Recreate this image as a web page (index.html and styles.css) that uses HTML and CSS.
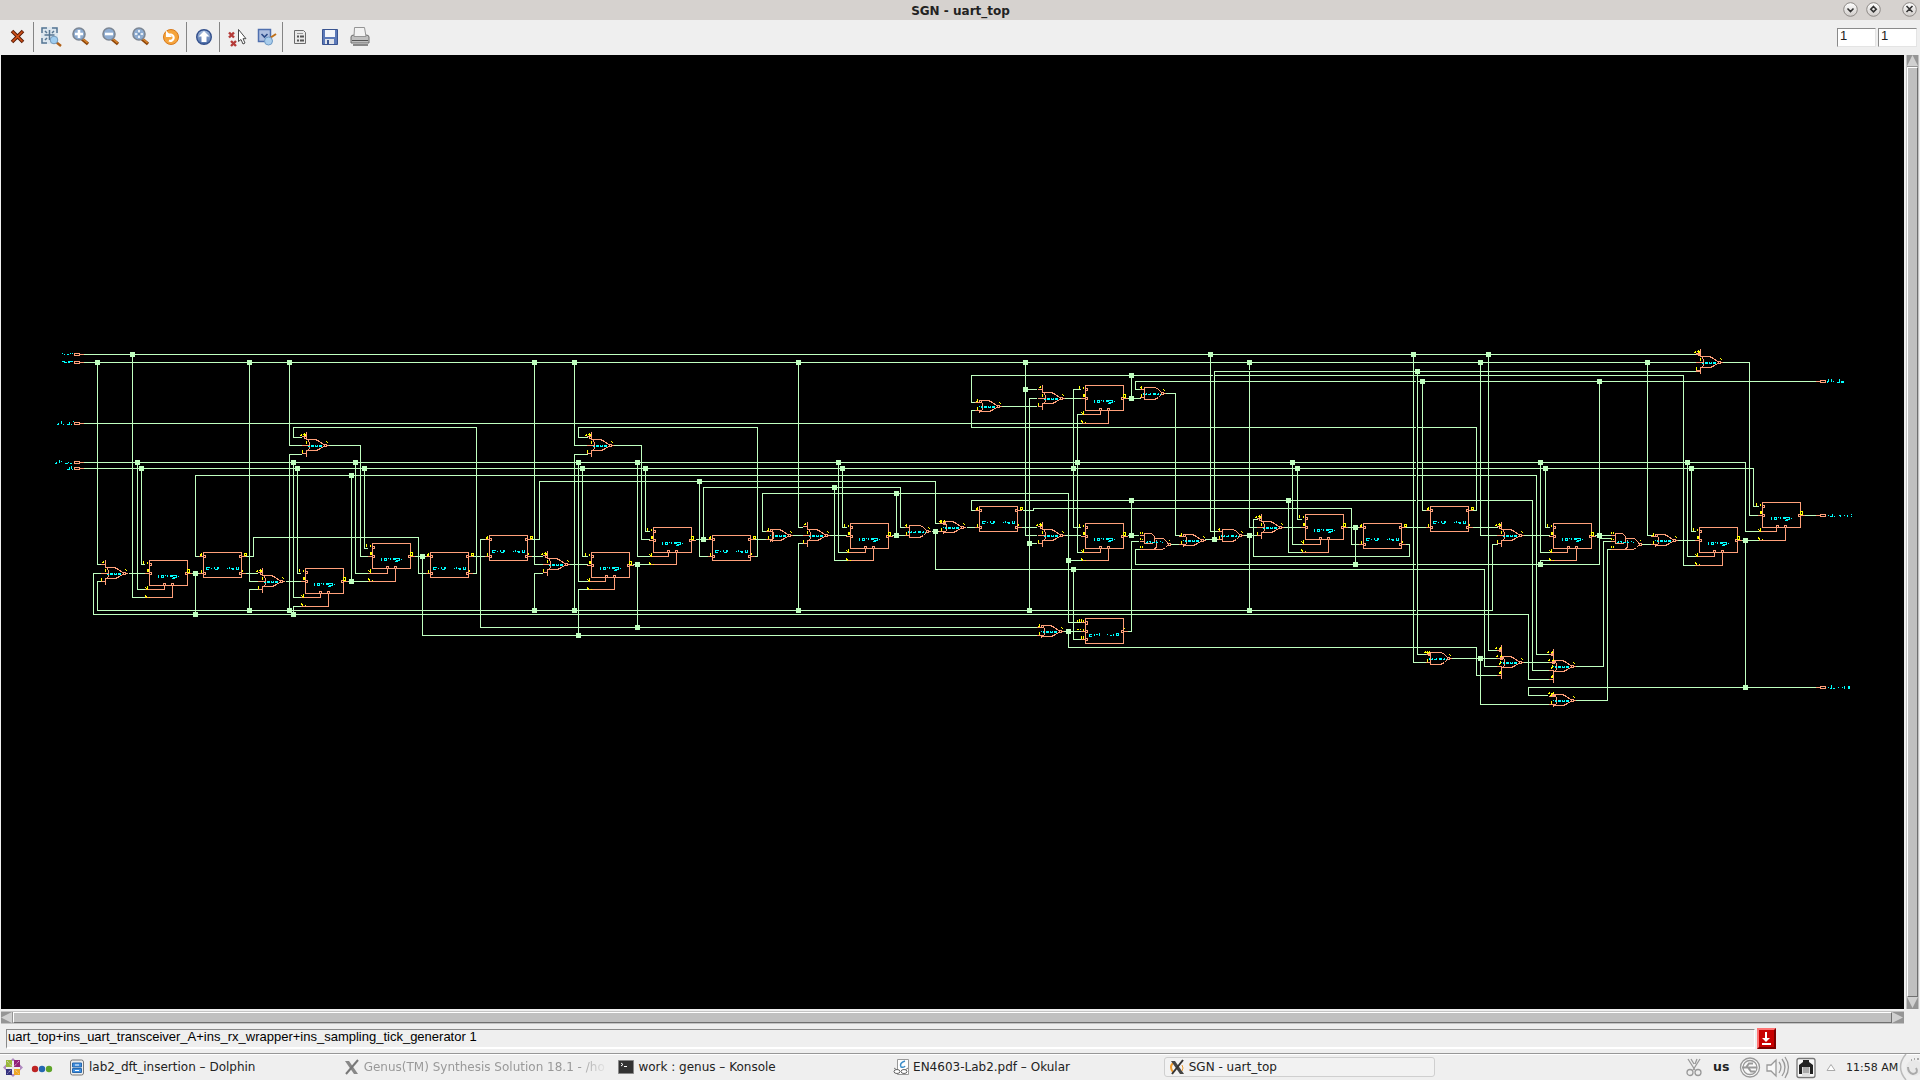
FILE: index.html
```html
<!DOCTYPE html>
<html lang="en">
<head>
<meta charset="utf-8">
<title>SGN - uart_top</title>
<link rel="stylesheet" href="styles.css">
</head>
<body>
<header class="titlebar">
  <span class="title">SGN - uart_top</span>
  <svg class="winbtns" width="84" height="20" viewBox="0 0 84 20">
    <defs><linearGradient id="btn" x2="0" y2="1"><stop offset="0" stop-color="#fff"/><stop offset="1" stop-color="#cfcbc8"/></linearGradient></defs>
    <g fill="url(#btn)" stroke="#8d8986"><circle cx="14.500" cy="9.500" r="6.800"/><circle cx="37.500" cy="9.500" r="6.800"/><circle cx="73.500" cy="9.500" r="6.800"/></g>
    <g fill="none" stroke="#333" stroke-width="1.600"><path d="M11.500 8.500l3 3 3-3M37.500 6.500l2.700 2.700-2.700 2.700-2.700-2.700zM70.500 6l6 6M76.500 6l-6 6"/></g>
  </svg>
</header>

<nav class="toolbar">
  <svg class="tools" width="400" height="35" viewBox="0 20 400 35">
    <defs>
      <linearGradient id="blue" x2="0" y2="1"><stop offset="0" stop-color="#a8bede"/><stop offset="1" stop-color="#4a6ca8"/></linearGradient>
      <g id="lens"><path d="M10 12l6 5" stroke="#8a4408" stroke-width="3.400"/><path d="M10.500 11.500l5 4.500" stroke="#d9822b" stroke-width="1.600"/><circle cx="7" cy="7" r="6" fill="#8fadd2" stroke="#7d8794" stroke-width="1.600"/></g>
    </defs>
    <path d="M12 31l11 11M23 31l-11 11" stroke="#5a1a04" stroke-width="3.600"/><path d="M12.500 31.500l10 10M22.500 31.500l-10 10" stroke="#d4541c" stroke-width="1.600"/>
    <path d="M33.500 22v30M186.500 22v30M219.500 22v30M282.500 22v30" stroke="#858585"/>
    <path d="M41 27h17v17H41z" fill="#dce6ee"/>
    <g fill="none" stroke="#567692" stroke-width="1.500"><path d="M42 33v-5h5M52 28h5v5M42 38v5h5M45 31l2 2M54 31l-2 2M45 40l2-2M49.500 30v10M44.500 35h10"/></g>
    <path d="M56 42l5 4" stroke="#b06018" stroke-width="2.400"/><circle cx="54" cy="40" r="3.800" fill="#9fcdf0" stroke="#7499ba"/>
    <use href="#lens" x="72" y="27"/><path d="M79 30v8M75 34h8" stroke="#fff" stroke-width="2.600"/>
    <use href="#lens" x="102" y="27"/><path d="M105 34h8" stroke="#fff" stroke-width="2.600"/>
    <use href="#lens" x="132" y="27"/><path d="M139 30v8M135 34h8" stroke="#fff" stroke-width="1.600"/><path d="M137.500 32.500h3v3h-3z" fill="#6f93bd"/>
    <circle cx="171" cy="37" r="7.500" fill="#f5a43c" stroke="#d87a1c"/><path d="M168 34.500h3a3.200 3.200 0 1 1-2 6" fill="none" stroke="#fff" stroke-width="2.200"/><path d="M166 30.500v6.500h6z" fill="#fff"/>
    <circle cx="204" cy="37" r="7.300" fill="url(#blue)" stroke="#34508c" stroke-width="1.400"/><path d="M204 31l5.500 5.500h-3v5.500h-5v-5.500h-3z" fill="#fff"/>
    <path d="M229 32.500l5 5M234 32.500l-5 5M231 41l5 5M236 41l-5 5" stroke="#b53b38" stroke-width="2.400"/>
    <path d="M238.500 29.500v12l2.500-2 2 4.500 2-1-2-4.300h3z" fill="#fff" stroke="#4a4a4a"/>
    <path d="M258.500 29.500h12v12h-12z" fill="#aebfe0" stroke="#4f6fae" stroke-width="1.500"/><path d="M261.500 34l3 3 3-3" fill="none" stroke="#2c4b88" stroke-width="1.600"/><path d="M270 38l6-4" stroke="#c07018" stroke-width="2"/><circle cx="268.500" cy="41" r="4" fill="#a9cdec" stroke="#6f9ac6"/>
    <path d="M294.500 30.500h9l2 2v11h-11z" fill="#e9e9e9" stroke="#6c6c6c"/><path d="M297 36.500h2M300 36.500h4M297 40.500h2M300 40.500h4" stroke="#555" stroke-width="2"/><path d="M297 33.500h6" stroke="#999"/>
    <path d="M322.500 29.500h15v15h-15z" fill="#5c79b8" stroke="#3a5490"/><path d="M325 30h10v7h-10z" fill="#f4f6fa"/><path d="M325 39h9v5h-9z" fill="#dfe3ea"/><path d="M327 40h2v4h-2z" fill="#3a5490"/>
    <path d="M351 37q0-2 3-2h12q3 0 3 2v6h-18z" fill="#bfbfbf" stroke="#6c6c6c"/><path d="M354.500 27.500h10l1.500 9h-12z" fill="#f2f2f2" stroke="#949494"/><path d="M352 40.500h16" stroke="#555"/><path d="M353 45h15" stroke="#888" stroke-width="2"/>
  </svg>
  <div class="fields"><span class="field">1</span><span class="field">1</span></div>
</nav>

<main class="view">
<svg class="canvas" width="1903" height="954" viewBox="1 55 1903 954">
<defs>
  <g id="port"><path class="c" d="M0-1h5v2h-5z"/></g>
  <g id="ff">
    <path class="c" d="M0 0H38V25H0zM0 3h2v2h-2M0 12h2v2h-2M38 12h-2v2h2M-4 13H0M38 13h4M14 25v-2h2v2M22 25v-2h2v2"/>
    <path class="y" d="M-6 1v2M-2 2v1M-6 3h0M-2 10h1M-2 11h1M-2 9h1M38 9h2v3h-2zM-4 27l1 1M-2 26v3M-4 35l1 2M0 37h0"/>
    <path class="t" d="M9 15v2M12 15h2v2h-2zM16 15h0M18 15v1M21 15h5M21 15v1h2M24 17h3v-2M23 18h2M29 16h0"/>
  </g>
  <g id="lt">
    <path class="c" d="M0 0H38V25H0zM0 3h2v2h-2M0 20h2v2h-2M38 3h-2v2h2M38 20h-2v2h2M-4 4H0M-4 21H0M38 4h4M38 21h4"/>
    <path class="y" d="M-3 3v-1M-2 1v2M-2 18v2M41 1h2v2h-2zM39 18v1"/>
    <path class="t" d="M6 15h-3v2h2M8 16h0M11 15v1M12 17h2v-2M15 15v1M24 16h0M26 15v1M28 16h1v1h1v-1M33 15v2h2v-2"/>
  </g>
  <g id="bub"><path class="c" d="M-2 -1h2v2h-2z"/><path class="y" d="M-6-2h0M-5-3v1M-1-3v1M-2-2h0"/></g>
  <g id="nb"><path class="c" d="M1-6H9L13-4 17-1M1 5H10L14 3 17 1M1-6L3-3V3L1 5M18-1h2v2h-2zM21 0h1"/>
    <path class="y" d="M20-4h0M21-3h0"/>
    <path class="t" d="M0 0h0M2 0v1h1M5 0h2v1h-2zM9 0v1h2v-1M13 0h2v1h-2z"/></g>
  <g id="n3"><use href="#nb"/><path class="c" d="M0-13V-6M0 5V11M-4-9H0M-4 0H3M-4 8H0"/><path class="y" d="M-3-11h1M-2-12v1M0-4v2M-4 5v2"/></g>
  <g id="n4"><use href="#nb"/><path class="c" d="M0-17V-6M0 5V16M-4-12H0M-4-4H0M-4 4H0M-4 13H0"/><path class="y" d="M-2 10v1M-1 9v2M-2 1v1M-1-1v2"/></g>
  <g id="n2"><use href="#nb"/><path class="c" d="M-4-4H1M-4 4H1M0-6V-4M0 4V6"/><path class="y" d="M-2-7v2M-3-5h1M-2 1v2"/></g>
  <g id="a2"><path class="c" d="M0-6.500H10L14-4 16-2M0-6V6H10L14 4 16 2M17-1h2v2h-2zM-4-4H0M-4 4H0M20 0h1"/>
    <path class="y" d="M-4-6h1M-3-7v2M-3 1v2M19-4h0M20-3h0"/><path class="t" d="M-1 1v-1M1 1h1v-1M4 1h1M6 0v1M9 0h2v1h-2zM13 1h1v-1M16 1h0"/></g>
  <g id="ao"><path class="c" d="M0 0H7L10 3V8L8 10H0zM10 5H19L23 9 24 11 21 14 18 16H-4M12 7V14L10 15M24 10h2v2h-2zM-4 2H0M-4 8H0"/>
    <path class="y" d="M-4-1v1M-2-1v1M-4 5v1M-2 6h0M-4 13v1M-2 13v1M25 7h0"/><path class="t" d="M2 9h1v-1M5 8h1v1M8 9h2M12 8v1h1M16 8h0M18 9h0"/></g>
</defs>
<g transform="translate(.5 .5)" shape-rendering="crispEdges">
<path class="w" d="
M84 354H1695M84 362H1695M84 423H1081M84 462H1745V531H1758M84 468H1753V506H1758
M199 556H195V475H1536V654H1548M301 437H293V427H476V573H472M587 437H578V427H757V556H753
M975 410H971V427H1476V510H1472M532 539H539V481H935V523H939M703 539V487H900V527H904
M766 531H762V493H1068V622H1080M975 510H971V500H1532V670H1548M1023 510H1033V508H1351V544H1358
M1140 549H1135V564H1599V381M935 531V569H1484V666H1497M101 564H97V362M101 581H97V610H1492V544H1497
M100 573H93V614H1528V679H1548M484 539H480V627H1036M422 556V635H1036M1068 631V647H1476V675H1497
M975 402H971V375H1683V565H1694M1214 539V371H1695M1140 389H1135V381H1815
M132 354V597H144M137 462V589H144M141 468V564H144M195 573V614M192 573H199M129 573H144
M249 362V581H257M257 589H249V610M245 573H257M289 362V445H301M301 454H289V610
M293 462V597H300M300 606H293V614M297 468V573H300M351 475V581M348 581H367M286 581H300
M355 462V573H367M329 445H360V556H367M364 468V548H367M245 556H253V537H418V573H425M414 556H425
M534 362V564H542M542 573H534V610M473 556H484M531 556H542M574 362V445H587M587 454H574V610
M578 462V581H587M587 589H578V635M582 468V556H587M570 564H587M637 462V556H649M637 564V627M633 564H649
M614 445H641V539H649M645 468V531H649M699 481V556H707M696 539H707M755 539H766
M798 362V527H802M802 543H798V610M792 535H802M838 462V552H846M842 468V527H846M834 487V560H846M830 535H846
M896 493V535M892 535H904M932 531H939M967 527H975M1021 527H1036
M1025 362V535H1036M1025 389H1036M1036 398H1029V610M1029 543H1036M1002 406H1036M1065 398H1080M1065 535H1080
M1080 389H1073V527H1080M1080 639H1073V569M1081 414H1077V552H1081M1068 560H1081M1063 631H1080
M1131 375V398M1128 398H1140M1131 500V535M1128 535H1138M1138 541H1131V631H1128
M1166 393H1175V535H1179M1170 544H1179M1210 354V531H1218M1205 539H1218M1249 362V527H1257M1249 535V610M1244 535H1257
M1257 519H1253V556H1409V544H1406M1284 527H1301M1292 462V544H1301M1297 468V519H1301M1288 500V552H1301
M1355 527V564M1347 527H1359M1413 354V662H1426M1417 371V654H1426M1422 381V510H1426M1406 527H1426M1472 527H1497
M1480 362V535H1497M1488 354V650H1497M1524 535H1549M1540 462V552H1549M1549 560H1540V564M1545 468V527H1549
M1595 535H1610M1599 538H1610M1575 666H1603V541H1610M1575 700H1607V549H1611M1647 362V535H1652M1641 544H1652
M1687 462V556H1695M1691 468V531H1695M1678 540H1695M1741 540H1758M1745 540V687M1547 695H1528V687H1815
M1723 362H1749V515H1758M1803 515H1815M1452 658H1497M1480 658V704H1548M1524 662H1548"/>
<path class="gap" d="M1213 375h0M1416 381h0M1416 427h0M1416 462h0M1416 468h0M1416 475h0M1416 500h0M1416 564h0M1416 610h0M1249 370h0"/>
<path class="c" d="M80 354h3M80 362h3M80 423h3M80 462h3M80 468h3M1816 381h3M1816 515h3M1816 687h3M1696 354h4M1696 371h3
M145 589H164V586M145 597H172V586M301 597H320V594M301 606H328V594M368 573H387V569M368 581H395V569
M588 581H605V578M588 589H614V578M650 556H668V553M650 564H676V553M847 552H865V549M847 560H873V549
M1082 414H1100V411M1082 423H1108V411M1082 552H1100V549M1082 560H1108V549M1302 544H1320V540M1302 552H1328V540
M1550 552H1567V549M1550 560H1576V549M1696 556H1714V553M1695 565H1722V553M1759 531H1776V528M1759 540H1785V528"/>
<use href="#port" x="74" y="354"/><use href="#port" x="74" y="362"/><use href="#port" x="74" y="423"/><use href="#port" x="74" y="462"/><use href="#port" x="74" y="468"/>
<use href="#port" x="1820" y="381"/><use href="#port" x="1820" y="515"/><use href="#port" x="1820" y="687"/>
<use href="#ff" x="149" y="560"/><use href="#ff" x="305" y="568"/><use href="#ff" x="372" y="543"/><use href="#ff" x="591" y="552"/><use href="#ff" x="653" y="527"/><use href="#ff" x="850" y="523"/>
<use href="#ff" x="1085" y="385"/><use href="#ff" x="1085" y="523"/><use href="#ff" x="1305" y="514"/><use href="#ff" x="1553" y="523"/><use href="#ff" x="1699" y="527"/><use href="#ff" x="1762" y="502"/>
<use href="#lt" x="203" y="552"/><use href="#lt" x="430" y="552"/><use href="#lt" x="489" y="535"/><use href="#lt" x="712" y="535"/><use href="#lt" x="979" y="506"/><use href="#lt" x="1363" y="523"/><use href="#lt" x="1430" y="506"/>
<path class="c" d="M1085 618h38v25h-38zM1085 621h2v3h-2M1085 630h2v2h-2M1085 638h2v2h-2M1123 630h-2v2h2M1081 622h4M1081 631h4M1081 639h4M1123 631h4"/>
<path class="y" d="M1077 620v1M1079 619v2M1081 619v2M1083 620v1M1077 629h1M1080 629h0M1083 629v1M1081 636v2M1083 636v2M1124 628h0"/>
<path class="t" d="M1091 634h-2v2h2M1094 634v1M1096 634h1M1099 635v-2M1107 634h0M1110 635h1M1113 634v1M1116 633h2v2h-2z"/>
<use href="#n3" x="105" y="573"/><use href="#n3" x="262" y="581"/><use href="#n3" x="306" y="445"/><use href="#n3" x="547" y="564"/><use href="#n3" x="591" y="445"/><use href="#n3" x="807" y="535"/>
<use href="#n3" x="1042" y="398"/><use href="#n3" x="1042" y="535"/><use href="#n3" x="1261" y="527"/><use href="#n3" x="1501" y="535"/><use href="#n3" x="1700" y="362"/>
<use href="#n4" x="1501" y="662"/><use href="#n4" x="1553" y="666"/>
<use href="#n2" x="770" y="535"/><use href="#n2" x="979" y="406"/><use href="#n2" x="943" y="527"/><use href="#n2" x="1041" y="631"/><use href="#n2" x="1183" y="540"/><use href="#n2" x="1655" y="540"/><use href="#n2" x="1553" y="700"/>
<use href="#a2" x="909" y="531"/><use href="#a2" x="1144" y="393"/><use href="#a2" x="1222" y="535"/><use href="#a2" x="1430" y="658"/>
<use href="#ao" x="1144" y="533"/><use href="#ao" x="1615" y="533"/>
<use href="#bub" x="262" y="573"/><use href="#bub" x="306" y="437"/><use href="#bub" x="547" y="556"/><use href="#bub" x="591" y="437"/><use href="#bub" x="1042" y="527"/><use href="#bub" x="1261" y="519"/><use href="#bub" x="1501" y="527"/><use href="#bub" x="1700" y="354"/>
<use href="#bub" x="1501" y="650"/><use href="#bub" x="1502" y="658"/><use href="#bub" x="1553" y="654"/><use href="#bub" x="1554" y="662"/><use href="#bub" x="945" y="523"/><use href="#bub" x="1554" y="695"/><use href="#bub" x="1430" y="654"/>
<path class="c" d="M772 529V541"/>
<path class="t" d="M62 353h0M64 354h0M67 354h1M70 353h0M72 353h0M62 361h2M64 362h2M68 362h1M68 361h4M58 423v1M57 424h0M61 421v2M63 424h0M67 424h1M69 422v2M71 424h0M73 421h0
M56 462v1M55 463h0M59 460v2M61 461h0M65 463h2M68 462h0M70 463h1M67 469h2M69 467v2M71 466v2M72 469h0
M1827 382v-1M1828 381v-2M1831 379v2M1833 381h0M1837 382h1M1839 379v3M1841 381h2v1h-2
M1828 515h0M1830 516h2M1832 514v2M1834 516h0M1839 515h1M1840 516h0M1844 515h0M1847 515v1M1851 514h0M1851 516h0
M1828 687h0M1830 688h1M1831 685v3M1833 688h1M1838 687h0M1842 687h0M1844 686v2M1848 686v2M1849 686v2"/>
<path class="j" d="M132 354h0M97 362h0M249 362h0M289 362h0M534 362h0M574 362h0M798 362h0M1025 362h0M1249 362h0M1480 362h0M1647 362h0M1210 354h0M1413 354h0M1488 354h0M1417 371h0M1422 381h0M1599 381h0M1131 375h0M1025 389h0M1131 398h0
M137 462h0M293 462h0M355 462h0M578 462h0M637 462h0M838 462h0M1077 462h0M1292 462h0M1540 462h0M1687 462h0
M141 468h0M297 468h0M364 468h0M582 468h0M645 468h0M842 468h0M1073 468h0M1297 468h0M1545 468h0M1691 468h0
M351 475h0M699 481h0M834 487h0M896 493h0M1131 500h0M1288 500h0M195 573h0M195 614h0M249 610h0M289 610h0M293 614h0M351 581h0M422 556h0M534 610h0M574 610h0M637 564h0M637 627h0M578 635h0M703 539h0M798 610h0
M896 535h0M935 531h0M1029 543h0M1029 610h0M1068 560h0M1073 569h0M1068 631h0M1131 535h0M1214 539h0M1249 535h0M1249 610h0M1355 527h0M1355 564h0M1540 564h0M1599 535h0M1745 540h0M1745 687h0M1480 658h0"/>
</g>
</svg>
<div class="vbar"><i class="arrow up"></i><i class="thumb"></i><i class="arrow down"></i></div>
</main>
<div class="hbar"><i class="arrow left"></i><i class="thumb"></i><i class="arrow right"></i></div>
<div class="status">
  <div class="path">uart_top+ins_uart_transceiver_A+ins_rx_wrapper+ins_sampling_tick_generator 1</div>
  <svg class="down" width="19" height="21" viewBox="0 0 19 21"><path d="M0 0h19v21H0z" fill="#7c0000"/><path d="M0 0h19l-2 2v17H2l-2 2z" fill="#ff7474"/><path d="M2 2h15v17H2z" fill="#c80000"/><path d="M8 4h2v6h3l-4 4-4-4h3zM5 15h9v2H5z" fill="#fff"/></svg>
</div>

<footer class="taskbar">
  <svg class="launch" width="65" height="26" viewBox="0 1054 65 26">
    <path d="M13 1058l3 3h-6zM13 1077l3-3h-6zM3 1067.500l3-3v6zM23 1067.500l-3-3v6z" fill="#b08ac0"/>
    <path d="M6 1060h6v7h-6z" fill="#9ab83a"/><path d="M14 1060h6v7h-6z" fill="#932279"/><path d="M6 1069h6v6h-6z" fill="#35327f"/><path d="M14 1069h6v6h-6z" fill="#efa724"/><path d="M7 1061l12 13M19 1061l-12 13" stroke="#e8d8e8" stroke-dasharray="1 1"/>
    <circle cx="35" cy="1069" r="3.200" fill="#bd2424"/><circle cx="42" cy="1069" r="3.200" fill="#2467b2"/><circle cx="49" cy="1069" r="3.200" fill="#5ea429"/>
  </svg>
  <div class="task"><svg width="16" height="17" viewBox="0 0 16 17"><rect x="1.500" y="1" width="13" height="15" rx="2" fill="#eee" stroke="#777"/><path d="M3.500 4h9v4h-9zM3.500 9.500h9v4h-9z" fill="#3e8ee0" stroke="#2868ac"/><path d="M6 6h4M6 11.500h4" stroke="#fff"/></svg><span>lab2_dft_insertion – Dolphin</span></div>
  <div class="task faded"><svg width="16" height="17" viewBox="0 0 16 17"><path d="M1 2h4l9 13h-4z" fill="#888"/><path d="M14 1L2 15" stroke="#777" stroke-width="2"/></svg><span>Genus(TM) Synthesis Solution 18.1 - /ho</span></div>
  <div class="task"><svg width="16" height="17" viewBox="0 0 16 17"><path d="M.5 1.500h15v13H.5z" fill="#333" stroke="#888"/><path d="M3 4l2 1.500L3 7M6 7.500h3" fill="none" stroke="#fff"/></svg><span>work : genus – Konsole</span></div>
  <div class="task"><svg width="16" height="17" viewBox="0 0 16 17"><path d="M4.500.5h11v15h-11z" fill="#fff" stroke="#999"/><path d="M12 2q-6 2-4 6 3 1 4-1" fill="none" stroke="#3b8dc9" stroke-width="1.500"/><path d="M1 9l3 2M15 9l-3 2" stroke="#777"/><ellipse cx="4" cy="12.500" rx="3" ry="2" fill="#fff" stroke="#666"/><ellipse cx="11" cy="12.500" rx="3" ry="2" fill="#fff" stroke="#666"/></svg><span>EN4603-Lab2.pdf – Okular</span></div>
  <div class="task active"><svg width="16" height="17" viewBox="0 0 16 17"><path d="M4 4Q0 8 4 13" fill="none" stroke="#ef9b2d" stroke-width="2"/><path d="M2 2h4l9 13h-4z" fill="#444"/><path d="M14 1L3 15" stroke="#333" stroke-width="2"/><path d="M13 6q2 3 0 6" fill="none" stroke="#ef9b2d"/></svg><span>SGN - uart_top</span></div>
  <div class="tray">
    <svg width="28" height="26" viewBox="0 0 28 26" fill="none" stroke="#999" stroke-width="1.300"><path d="M3 5l7 11M15 5L8 16M6 5l3 5M12 5l-2 5"/><circle cx="5" cy="18.500" r="3"/><circle cx="13" cy="18.500" r="3"/></svg>
    <b>us</b>
    <svg width="108" height="26" viewBox="1734 0 108 26"><g fill="#f8f8f8" stroke="#999" stroke-width="1.300"><circle cx="1750" cy="13.500" r="9.500"/><circle cx="1750" cy="13.500" r="7"/><path d="M1742 13.500h15M1746 13.500l3-4h4M1748 13.500l3 4h4" stroke-width="2"/><path d="M1767 11h4l5-5v16l-5-5h-4z"/><path d="M1779 8q4 5 0 11M1782 5q6 8 0 17M1785 3q7 10 0 21" fill="none"/><rect x="1797" y="4.500" width="18" height="19" rx="2" stroke="#777"/></g><path d="M1799 11l4-3v-2h6v2l4 3v9h-14z" fill="#222"/><path d="M1802 13h8v9h-8z" fill="#ddd"/><path d="M1804 13v6M1806 13v6M1808 13v6" stroke="#777"/><path d="M1827 16.500h8l-4-6z" fill="#fff" stroke="#aaa"/></svg>
    <span class="clock">11:58 AM</span>
    <svg width="24" height="26" viewBox="1896 0 24 26" fill="none" stroke="#bbb"><path d="M1906 0q-11 13 0 26" stroke-width="1.500"/><circle cx="1914" cy="14" r="8" fill="#e8e8e8" stroke="none"/><path d="M1908 13q0 6 5 7 6-1 3-6M1911 6h1M1914 5h1M1917 5h2" stroke="#aaa" stroke-width="2"/></svg>
  </div>
</footer>
</body>
</html>
```
FILE: styles.css
```css
* { box-sizing: border-box; }
body {
  margin: 0; width: 1920px; height: 1080px; overflow: hidden;
  display: flex; flex-direction: column;
  background: #efefef; color: #222;
  font: 12px/1 "DejaVu Sans", sans-serif;
}
svg { display: block; flex: none; }

.titlebar { height: 20px; flex: none; background: #d6d2cf; display: grid; grid-template-columns: 84px 1fr 84px; align-items: center; }
.title { grid-column: 2; text-align: center; font-weight: bold; font-size: 12px; padding: 1px 0 0 1px; }

.toolbar { height: 35px; flex: none; display: flex; justify-content: space-between; }
.fields { display: flex; gap: 2px; padding: 8px 3px 0 0; }
.field {
  width: 39px; height: 19px; background: #fff; color: #222;
  border: 1px solid; border-color: #8a8a8a #e4e4e4 #e4e4e4 #8a8a8a;
  padding: 0 2px; font: 13px/13px "Liberation Sans", sans-serif;
}

.view { height: 954px; flex: none; display: flex; padding-left: 1px; }
.canvas { background: #000; }
.canvas path { fill: none; stroke-width: 1; stroke-linecap: square; }
.canvas .w { stroke: #c0ffc0; }
.canvas .c { stroke: #ffa07a; }
.canvas .y { stroke: #ff0; }
.canvas .t { stroke: #0ff; }
.canvas .gap { stroke: #000; }
.canvas .j { stroke: #c0ffc0; stroke-width: 5; }

.vbar { width: 13px; margin-left: 2px; display: flex; flex-direction: column; background: #959595; border: 1px solid #c3c3c3; border-width: 0 1px; }
.hbar { height: 13px; width: 1903px; flex: none; margin: 2px 0 0 1px; display: flex; background: #959595; border: 1px solid #c3c3c3; border-width: 1px 0; }
.thumb { flex: 1; background: #c0c0c0; border: 1px solid; border-color: #fff #707070 #707070 #fff; }
.arrow { width: 12px; height: 12px; flex: none; }
.arrow::before { content: ""; display: block; width: 11px; height: 11px; background: #d0d0d0; }
.up::before { clip-path: polygon(50% 0, 100% 100%, 0 100%); }
.down::before { clip-path: polygon(0 0, 100% 0, 50% 100%); }
.left::before { clip-path: polygon(0 50%, 100% 0, 100% 100%); }
.right::before { clip-path: polygon(0 0, 100% 50%, 0 100%); }

.status { height: 29px; flex: none; display: flex; padding: 4px 0 0 6px; }
.path {
  width: 1749px; height: 20px; margin: 1px 2px 0 0; padding: 0 1px;
  border: 1px solid; border-color: #8a8a8a #fff #fff #8a8a8a; border-bottom-width: 2px;
  font: 13px/14px "Liberation Sans", sans-serif; color: #000; white-space: nowrap;
}

.taskbar { height: 27px; flex: none; border-top: 1px solid #979797; display: flex; box-shadow: inset 0 1px #fff; }
.task { width: 274.7px; height: 20px; margin-top: 3px; padding-left: 4px; display: flex; align-items: center; gap: 4px; white-space: nowrap; flex: none; }
.task.faded { color: #999; -webkit-mask-image: linear-gradient(90deg, #000 87%, transparent 98%); mask-image: linear-gradient(90deg, #000 87%, transparent 98%); }
.task.active { width: 271px; border: 1px solid #cfcfcf; border-radius: 3px; background: #f2f2f2; }
.tray { margin-left: auto; display: flex; align-items: center; height: 26px; }
.tray b { font-size: 12.500px; width: 21px; padding-top: 1px; }
.clock { font-size: 11px; width: 54px; padding-left: 4px; white-space: nowrap; }
```
